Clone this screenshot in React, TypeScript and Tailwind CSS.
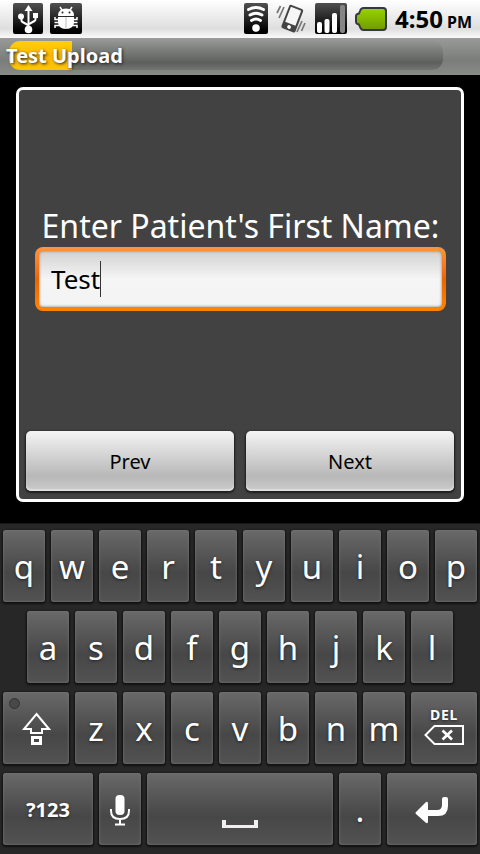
import { useState } from "react";
import type { ReactNode } from "react";

const TOP_ROW = "qwertyuiop".split("");
const HOME_ROW = "asdfghjkl".split("");
const BOTTOM_ROW = "zxcvbnm".split("");

function UsbIcon() {
  return (
    <svg width="30" height="31" viewBox="0 0 30 31" aria-hidden="true">
      <defs>
        <linearGradient id="tile" x1="0" y1="0" x2="0" y2="1">
          <stop offset="0" stopColor="#505050" />
          <stop offset="0.9" stopColor="#000" />
        </linearGradient>
      </defs>
      <rect width="30" height="31" rx="2" fill="url(#tile)" />
      <g fill="none" stroke="#fff" strokeWidth="2">
        <path d="M15.500 5V27" />
        <path d="M8.500 15V17.500Q8.500 18.500 9.500 19L15 22" />
        <path d="M22.500 13V16Q22.500 17.500 21.500 18L16 21" />
      </g>
      <g fill="#fff">
        <path d="M15.500 2L19.500 8H11.500Z" />
        <circle cx="8" cy="13.500" r="3" />
        <rect x="20" y="10" width="5" height="5" />
        <circle cx="15.500" cy="26.500" r="3.800" />
      </g>
    </svg>
  );
}

function BugIcon() {
  return (
    <svg width="32" height="31" viewBox="0 0 32 31" aria-hidden="true">
      <rect width="32" height="31" rx="2" fill="url(#tile)" />
      <g fill="none" stroke="#fff" strokeWidth="1.500">
        <path d="M10 4L12 7M22 4L20 7" />
        <path d="M9 16.500H5V14M23 16.500H27V14M9 19.500H4.500M23 19.500H27.500M9 22.500H5V25M23 22.500H27V25" />
      </g>
      <path d="M8 13Q8 5.500 16 5.500Q24 5.500 24 13Z" fill="#fff" />
      <path d="M8 14H24V19Q24 26 16 26Q8 26 8 19Z" fill="#fff" />
      <path d="M16 14V26" stroke="#bbb" strokeWidth="1" />
      <circle cx="12.500" cy="9.500" r="1" fill="#222" />
      <circle cx="19.500" cy="9.500" r="1" fill="#222" />
    </svg>
  );
}

function WifiIcon() {
  return (
    <svg width="24" height="31" viewBox="0 0 24 31" aria-hidden="true">
      <rect width="24" height="31" rx="2" fill="url(#tile)" />
      <g fill="none" stroke="#fff" strokeWidth="2.900" strokeLinecap="round">
        <path d="M4.500 6.500Q12 2.500 19.500 6.500" />
        <path d="M6 12Q12 8.500 18 12" />
        <path d="M7.500 17.500Q12 14.500 16.500 17.500" />
      </g>
      <circle cx="12" cy="25" r="3.800" fill="#fff" />
    </svg>
  );
}

function VibrateIcon() {
  return (
    <svg width="30" height="31" viewBox="0 0 30 31" aria-hidden="true">
      <g transform="rotate(21 16 15)">
        <rect x="9" y="3" width="15" height="25" rx="2" fill="#444" />
        <rect x="11" y="5" width="11" height="16" fill="#f6f6f6" />
        <circle cx="16.500" cy="24.500" r="1.900" fill="#fff" />
      </g>
      <g stroke="#777" strokeWidth="1.700" fill="none">
        <path d="M4.500 3L1 10M8 4L3 15M26 18L21 29M29 20L25.500 28" />
      </g>
    </svg>
  );
}

function SignalIcon() {
  return (
    <svg width="32" height="31" viewBox="0 0 32 31" aria-hidden="true">
      <rect width="32" height="31" rx="2" fill="url(#tile)" />
      <g fill="#fff">
        <rect x="2" y="19" width="5" height="11" rx="2" />
        <rect x="9.500" y="16" width="5" height="14" rx="2" />
        <rect x="17" y="10" width="5" height="20" rx="2" />
        <rect x="25" y="2" width="5" height="28" rx="2" fill="#858585" />
      </g>
    </svg>
  );
}

function BatteryIcon() {
  return (
    <svg width="32" height="24" viewBox="0 0 32 24" aria-hidden="true">
      <defs>
        <linearGradient id="charge" x1="0" y1="0" x2="0" y2="1">
          <stop offset="0" stopColor="#98d400" />
          <stop offset="1" stopColor="#6f9a00" />
        </linearGradient>
      </defs>
      <path
        d="M8.500 1H28Q31 1 31 4V20Q31 23 28 23H8.500Q6 23 5 20L4 17.500L2.500 17Q1 16.500 1 15V9Q1 7.500 2.500 7L4 6.500L5 4Q6 1 8.500 1Z"
        fill="url(#charge)"
        stroke="#35383c"
        strokeWidth="2"
      />
    </svg>
  );
}

function ShiftIcon() {
  return (
    <svg width="30" height="34" viewBox="0 0 30 34" fill="none" stroke="#fff" strokeWidth="2" aria-hidden="true">
      <path d="M15.500 2L28 17H21V21H10V17H3Z" />
      <rect x="11.500" y="25.500" width="8" height="6" strokeWidth="3" />
    </svg>
  );
}

function MicIcon() {
  return (
    <svg width="20" height="31" viewBox="0 0 20 31" fill="none" stroke="#fff" strokeWidth="2" aria-hidden="true">
      <rect x="5.500" y="0" width="9" height="20" rx="4" fill="#fff" stroke="none" />
      <path d="M1 14V16Q1 24 10 24Q19 24 19 16V14M10 24V29M5 29.500H15" />
    </svg>
  );
}

function DeleteIcon() {
  return (
    <svg width="40" height="20" viewBox="0 0 40 20" fill="none" stroke="#fff" strokeWidth="2" aria-hidden="true">
      <path d="M10.500 1H39V19H10.500L1.500 10Z" />
      <path d="M18.500 5.500L28 14.500M28 5.500L18.500 14.500" strokeWidth="2.700" />
    </svg>
  );
}

function EnterIcon() {
  return (
    <svg width="34" height="27" viewBox="0 0 34 27" aria-hidden="true">
      <path
        d="M27 2Q27 0 29 0H31Q33 0 33 2V9Q33 19 23 19H13V24Q13 28 10 25L1 17Q0 16 1 15L10 6Q13 3 13 7V13H22Q27 13 27 8Z"
        fill="#fff"
      />
    </svg>
  );
}

type KeyProps = { label: string; span?: string; children?: ReactNode; onPress?: () => void };

function Key({ label, span = "col-span-2", children, onPress }: KeyProps) {
  return (
    <button
      type="button"
      aria-label={label}
      onClick={onPress}
      className={`${span} relative flex h-[72px] flex-col items-center justify-center rounded-[3px] bg-linear-to-b from-[#696969] via-[#474747] via-60% to-[#525252] pt-[2px] text-[33px] leading-10 text-white shadow-[0_1px_2px_1px_#111,inset_0_0_3px_#777] text-shadow-[0_1px_3px_#222]`}
    >
      {children ?? label}
    </button>
  );
}

export default function App() {
  const [name, setName] = useState("Test");
  const type = (c: string) => () => setName((n) => n + c);
  const navButton =
    "h-[60px] rounded-[5px] bg-linear-to-b from-[#f5f5f5] via-[#b8b8b8] via-75% to-[#cbcbcb] pt-[2px] text-[20px] leading-8 text-black shadow-[0_1px_2px_1px_#1c1c1c,inset_0_-2px_1px_#dedede]";

  return (
    <div className="flex min-h-screen flex-col bg-black font-['Noto_Sans','Open_Sans',sans-serif]">
      <header>
        <div className="flex h-[38px] items-center justify-between bg-linear-to-b from-white via-[#dedede] via-75% to-[#fafafa] pr-2 pb-px pl-[13px]">
          <div className="flex gap-[7px]">
            <UsbIcon />
            <BugIcon />
          </div>
          <div className="flex items-center">
            <div className="flex items-center gap-2">
              <WifiIcon />
              <div className="flex items-center gap-[9px]">
                <VibrateIcon />
                <SignalIcon />
              </div>
              <BatteryIcon />
            </div>
            <time className="ml-2 flex items-baseline gap-1 pt-[3px] leading-8 font-bold text-black">
              <span className="text-[24px]">4:50</span>
              <span className="text-[16px]">PM</span>
            </time>
          </div>
        </div>
        <div className="grid h-[37px] bg-linear-to-b from-[#999b98] via-[#7b7d7a] via-60% to-[#888a87]">
          <div className="col-start-1 row-start-1 mt-[3px] mr-[37px] ml-[9px] h-[29px] overflow-hidden rounded-[11px] bg-linear-to-b from-[#939592] via-[#5c5f5b] via-75% to-[#737572]">
            <div className="h-full w-[63px] bg-linear-to-b from-[#ffd00c] via-[#ffb700] to-[#ffc400]" />
          </div>
          <h1 className="col-start-1 row-start-1 self-center pb-[2px] pl-[6px] text-[20px] leading-7 font-bold text-white text-shadow-[1px_1px_3px_#222]">
            Test Upload
          </h1>
        </div>
      </header>

      <main className="flex flex-1 flex-col px-4 pt-3 pb-[21px]">
        <form
          onSubmit={(e) => e.preventDefault()}
          className="flex flex-1 flex-col rounded-[7px] border-3 border-white bg-[#424242] px-[7px] pb-2"
        >
          <div className="flex flex-1 flex-col justify-center pr-2 pb-1 pl-[9px]">
            <label htmlFor="first-name" className="pb-px text-center text-[32px] leading-10 whitespace-nowrap text-white">
              Enter Patient's First Name:
            </label>
            <div className="relative h-16 rounded-[8px] bg-linear-to-b from-[#ff943c] via-[#ed6400] to-[#ff8500] p-1">
              <input
                id="first-name"
                value={name}
                onChange={(e) => setName(e.target.value)}
                className="h-full w-full rounded-[4px] bg-linear-to-b from-[#d2d2d2] via-[#f5f5f5] via-50% to-[#f3f3f3] px-3 text-[26px] text-black shadow-[inset_0_0_3px_#777] outline-none"
              />
              <div aria-hidden="true" className="pointer-events-none absolute inset-y-[14px] left-4 border-r border-[#333] text-[26px] leading-9">
                <span className="invisible">{name}</span>
              </div>
            </div>
          </div>
          <div className="grid grid-cols-2 gap-3">
            <button type="button" className={navButton}>Prev</button>
            <button type="submit" className={navButton}>Next</button>
          </div>
        </form>
      </main>

      <section
        aria-label="Keyboard"
        className="grid grid-cols-20 gap-x-[6px] gap-y-[9px] border-t border-[#181818] bg-[#272727] px-[3px] pt-[6px] pb-[9px]"
      >
        {TOP_ROW.map((c) => <Key key={c} label={c} onPress={type(c)} />)}
        {HOME_ROW.map((c, i) => (
          <Key key={c} label={c} span={i === 0 ? "col-span-2 col-start-2" : "col-span-2"} onPress={type(c)} />
        ))}
        <Key label="Shift" span="col-span-3 col-start-1">
          <span className="absolute top-[6px] left-[6px] size-[11px] rounded-full border border-[#333] bg-[#484848]" />
          <ShiftIcon />
        </Key>
        {BOTTOM_ROW.map((c) => <Key key={c} label={c} onPress={type(c)} />)}
        <Key label="Delete" span="col-span-3" onPress={() => setName((n) => n.slice(0, -1))}>
          <span className="text-[14px] leading-5 font-bold tracking-wider">DEL</span>
          <DeleteIcon />
          <span className="h-2" />
        </Key>
        <Key label="Symbols" span="col-span-4">
          <span className="text-[20px] font-bold">?123</span>
        </Key>
        <Key label="Voice input"><MicIcon /></Key>
        <Key label="Space" span="col-span-8" onPress={type(" ")}>
          <span className="mt-7 h-2 w-9 border-x-4 border-b-3 border-[#f3eff0]" />
        </Key>
        <Key label="." onPress={type(".")} />
        <Key label="Enter" span="col-span-4"><EnterIcon /></Key>
      </section>
    </div>
  );
}
